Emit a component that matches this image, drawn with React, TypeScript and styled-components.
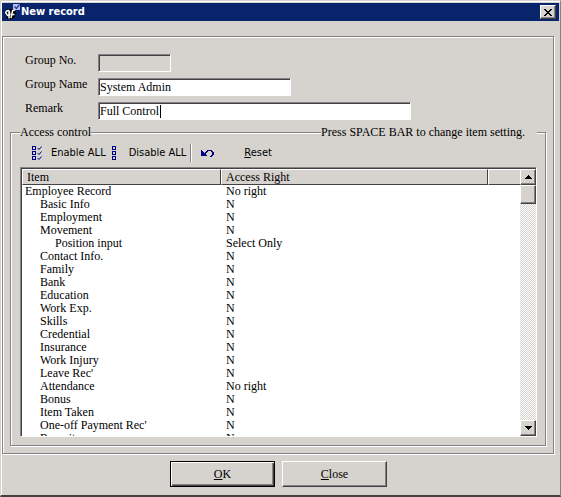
import React, { useEffect, useRef } from "react";
import styled, { createGlobalStyle } from "styled-components";

const face = "#d6d3ce";
const shadow = "#848284";
const dark = "#424142";
const serif = `"Liberation Serif", "Times New Roman", serif`;
const sans = `"DejaVu Sans Condensed", "DejaVu Sans", Tahoma, sans-serif`;

const GlobalStyle = createGlobalStyle`
  * { box-sizing: border-box; }
  body { margin: 0; background: ${face}; }
  button, input { font: inherit; color: inherit; border-radius: 0; }
`;

const Dialog = styled.main`
  display: flex;
  flex-direction: column;
  height: 100vh;
  min-height: 320px;
  padding: 2px 1px 1px 1px;
  background: ${face};
  border-style: solid;
  border-width: 1px 1px 2px 1px;
  border-color: ${face} ${shadow} ${dark} ${face};
  box-shadow: inset 1px 1px 0 #fff;
  font: 12px/13px ${serif};
  color: #000;
  overflow: hidden;
`;

const TitleBar = styled.header`
  display: flex;
  align-items: center;
  flex: none;
  height: 18px;
  padding: 0 3px 0 2px;
  gap: 1px;
  background: #08246b;
  color: #fff;
`;

const Title = styled.h1`
  flex: 1;
  margin: 0;
  font: bold 11px/16px ${sans};
`;

const raised = `
  background: ${face};
  border: 1px solid;
  border-color: #fff ${dark} ${dark} #fff;
  box-shadow: inset -1px -1px 0 ${shadow};
`;

const CloseBox = styled.button`
  display: grid;
  place-items: center;
  width: 16px;
  height: 14px;
  padding: 0;
  ${raised}
`;

const etched = `
  border: 1px solid ${shadow};
  box-shadow: 1px 1px 0 #fff, inset 1px 1px 0 #fff;
`;

const Panel = styled.section`
  display: flex;
  flex-direction: column;
  flex: 1;
  min-height: 0;
  margin: 15px 5px 0 0;
  padding: 17px 7px 7px 7px;
  ${etched}
`;

const Fields = styled.div`
  display: grid;
  grid-template-columns: 73px 1fr;
  row-gap: 6px;
  padding-left: 15px;
`;

const FieldLabel = styled.label`
  line-height: 13px;
`;

const TextBox = styled.input<{ $width: number }>`
  display: block;
  width: ${(p) => p.$width}px;
  max-width: 100%;
  height: 18px;
  padding: 1px 1px 0 1px;
  outline: none;
  caret-color: transparent;
  background: ${(p) => (p.disabled ? face : "#fff")};
  border: 1px solid;
  border-color: ${shadow} #fff #fff ${shadow};
  box-shadow: inset 1px 1px 0 ${dark};
`;

const ActiveField = styled.div`
  position: relative;
`;

const Caret = styled.span`
  position: absolute;
  left: 62px;
  top: 3px;
  width: 1px;
  height: 13px;
  background: #000;
`;

const Group = styled.fieldset`
  display: flex;
  flex-direction: column;
  flex: 1;
  min-width: 0;
  min-height: 0;
  margin: 6px 0 0;
  padding: 0 8px 8px 9px;
  ${etched}
`;

const Legend = styled.legend`
  display: flex;
  align-items: center;
  width: 100%;
  padding: 0;
  background: ${face};
`;

const Rule = styled.span`
  flex: 1;
  height: 2px;
  background: #fff;
  border-top: 1px solid ${shadow};
`;

const Hint = styled.span`
  padding-right: 12px;
`;

const Toolbar = styled.div`
  display: flex;
  align-items: center;
  flex: none;
  height: 20px;
  margin: 4px 0;
  padding-left: 11px;
  font: 11px/14px ${sans};
`;

const ToolButton = styled.button<{ $gap: number }>`
  display: flex;
  align-items: center;
  gap: ${(p) => p.$gap}px;
  padding: 0;
  margin-right: 6px;
  border: 0;
  background: none;
  white-space: nowrap;
`;

const Divider = styled.span`
  width: 2px;
  height: 18px;
  margin: 0 9px 0 -2px;
  background: #fff;
  border-left: 1px solid ${shadow};
`;

const ListBox = styled.div`
  display: flex;
  flex: 1;
  min-height: 0;
  border: 1px solid;
  border-color: ${shadow} #fff #fff ${shadow};
  background: #fff;
  box-shadow: inset 1px 1px 0 ${dark};
  padding: 1px 0 0 1px;
`;

const ListView = styled.div`
  flex: 1;
  min-width: 0;
  overflow: hidden;
`;

const Table = styled.table`
  width: 100%;
  table-layout: fixed;
  border-collapse: separate;
  border-spacing: 0;
`;

const Th = styled.th<{ $width?: number }>`
  width: ${(p) => (p.$width ? `${p.$width}px` : "auto")};
  height: 16px;
  padding: 0 5px 0 4px;
  text-align: left;
  font-weight: normal;
  background: ${face};
  border: 1px solid;
  border-color: #fff ${dark} ${dark} #fff;
  &:last-child { border-right: 0; }
`;

const Td = styled.td<{ $level?: number }>`
  height: 13px;
  padding: 0 0 0 ${(p) => (p.$level === undefined ? 5 : 3 + p.$level * 15)}px;
  white-space: nowrap;
`;

const ScrollBar = styled.div`
  display: flex;
  flex-direction: column;
  flex: none;
  width: 16px;
  background: repeating-conic-gradient(#fff 0 25%, ${face} 0 50%) 0 0 / 2px 2px;
`;

const ScrollButton = styled.button`
  display: grid;
  place-items: center;
  flex: none;
  height: 16px;
  padding: 0;
  ${raised}
`;

const Thumb = styled.div`
  height: 19px;
  ${raised}
`;

const Track = styled.div`
  flex: 1;
`;

const Actions = styled.footer`
  display: flex;
  justify-content: center;
  gap: 7px;
  flex: none;
  padding: 7px 4px 7px 0;
`;

const PushButton = styled.button<{ $primary?: boolean }>`
  width: 105px;
  height: 26px;
  padding: 0;
  ${raised}
  ${(p) =>
    p.$primary &&
    `border-color: #000; box-shadow: inset 1px 1px 0 #fff, inset -1px -1px 0 ${dark}, inset -2px -2px 0 ${shadow};`}
`;

const rows: [string, number, string][] = [
  ["Employee Record", 0, "No right"],
  ["Basic Info", 1, "N"],
  ["Employment", 1, "N"],
  ["Movement", 1, "N"],
  ["Position input", 2, "Select Only"],
  ["Contact Info.", 1, "N"],
  ["Family", 1, "N"],
  ["Bank", 1, "N"],
  ["Education", 1, "N"],
  ["Work Exp.", 1, "N"],
  ["Skills", 1, "N"],
  ["Credential", 1, "N"],
  ["Insurance", 1, "N"],
  ["Work Injury", 1, "N"],
  ["Leave Rec'", 1, "N"],
  ["Attendance", 1, "No right"],
  ["Bonus", 1, "N"],
  ["Item Taken", 1, "N"],
  ["One-off Payment Rec'", 1, "N"],
  ["Recruit", 1, "N"],
];

const AppIcon = () => (
  <svg width="16" height="16" viewBox="0 0 16 16" aria-hidden="true">
    <path d="M0 8l4-3h5l3 3l-1 5l-3 2h-5l-1-3z" fill="#000" />
    <path d="M1.500 8.500q1-2 3-2l1 1.500v3l-2 .5zM5 7.500v7" fill="none" stroke="#fff" strokeWidth="1.500" />
    <path d="M7 14l1.500-7q1-1.500 2.500-.5M6.500 10.500h4" fill="none" stroke="#fff" strokeWidth="1.500" />
    <rect x="9" y="0" width="7" height="6" fill="#b5bcee" />
    <path d="M10.500 2.500l2 2l3-4" fill="none" stroke="#30388c" strokeWidth="1.300" />
  </svg>
);

const EnableIcon = () => (
  <svg width="11" height="15" viewBox="0 0 11 15" shapeRendering="crispEdges" fill="none" stroke="#000084" aria-hidden="true">
    <path d="M1.500.5h3v3h-3zM1.500 5.500h3v3h-3zM1.500 10.500h3v3h-3z" />
    <path shapeRendering="auto" d="M6.500 2l1.500 1.500l2.500-3M6.500 7l1.500 1.500l2.500-3M6.500 12l1.500 1.500l2.500-3" />
  </svg>
);

const DisableIcon = () => (
  <svg width="5" height="15" viewBox="0 0 5 15" shapeRendering="crispEdges" fill="none" stroke="#000084" aria-hidden="true">
    <path d="M.5.5h3v3h-3zM.5 5.500h3v3h-3zM.5 10.500h3v3h-3z" />
  </svg>
);

const UndoIcon = () => (
  <svg width="13" height="9" viewBox="0 0 13 9" shapeRendering="crispEdges" fill="#000084" aria-hidden="true">
    <path d="M0 1h1v1h1v1h1v1h1v1h1v1h1v1h-6z" />
    <path d="M4 3h1v-1h1v-1h5v1h1v1h1v3h-1v1h-1v1h-2v-1h1v-1h1v-3h-1v-1h-3v1h-1v1h-1v1h-1z" />
  </svg>
);

const Arrow = ({ down }: { down?: boolean }) => (
  <svg width="7" height="4" viewBox="0 0 7 4" shapeRendering="crispEdges" aria-hidden="true">
    <path d={down ? "M0 0h7l-3.500 4z" : "M0 4h7l-3.500-4z"} />
  </svg>
);

export default function App() {
  const remark = useRef<HTMLInputElement>(null);
  useEffect(() => {
    const box = remark.current;
    box?.focus();
    box?.setSelectionRange(box.value.length, box.value.length);
  }, []);

  return (
    <>
      <GlobalStyle />
      <Dialog>
        <TitleBar>
          <AppIcon />
          <Title>New record</Title>
          <CloseBox aria-label="Close window">
            <svg width="8" height="7" viewBox="0 0 8 7" shapeRendering="crispEdges" aria-hidden="true">
              <path d="M0 0h2v1h1v1h2v-1h1v-1h2v1h-1v1h-1v1h-1v1h1v1h1v1h1v1h-2v-1h-1v-1h-2v1h-1v1h-2v-1h1v-1h1v-1h1v-1h-1v-1h-1v-1h-1z" />
            </svg>
          </CloseBox>
        </TitleBar>
        <Panel>
          <Fields>
            <FieldLabel htmlFor="group-no">Group No.</FieldLabel>
            <TextBox id="group-no" $width={73} disabled />
            <FieldLabel htmlFor="group-name">Group Name</FieldLabel>
            <TextBox id="group-name" $width={193} defaultValue="System Admin" />
            <FieldLabel htmlFor="remark">Remark</FieldLabel>
            <ActiveField>
              <TextBox id="remark" ref={remark} $width={313} defaultValue="Full Control" />
              <Caret />
            </ActiveField>
          </Fields>
          <Group>
            <Legend>
              <span>Access control</span>
              <Rule />
              <Hint>Press SPACE BAR to change item setting.</Hint>
            </Legend>
            <Toolbar>
              <ToolButton $gap={9}><EnableIcon />Enable ALL</ToolButton>
              <ToolButton $gap={12}><DisableIcon />Disable ALL</ToolButton>
              <Divider />
              <ToolButton $gap={30}><UndoIcon /><span><u>R</u>eset</span></ToolButton>
            </Toolbar>
            <ListBox>
              <ListView>
                <Table>
                  <thead>
                    <tr>
                      <Th $width={199}>Item</Th>
                      <Th $width={267}>Access Right</Th>
                      <Th aria-label="Notes" />
                    </tr>
                  </thead>
                  <tbody>
                    {rows.map(([name, level, right]) => (
                      <tr key={name}>
                        <Td $level={level}>{name}</Td>
                        <Td>{right}</Td>
                        <Td />
                      </tr>
                    ))}
                  </tbody>
                </Table>
              </ListView>
              <ScrollBar>
                <ScrollButton aria-label="Scroll up"><Arrow /></ScrollButton>
                <Thumb />
                <Track />
                <ScrollButton aria-label="Scroll down"><Arrow down /></ScrollButton>
              </ScrollBar>
            </ListBox>
          </Group>
        </Panel>
        <Actions>
          <PushButton $primary><u>O</u>K</PushButton>
          <PushButton><u>C</u>lose</PushButton>
        </Actions>
      </Dialog>
    </>
  );
}
